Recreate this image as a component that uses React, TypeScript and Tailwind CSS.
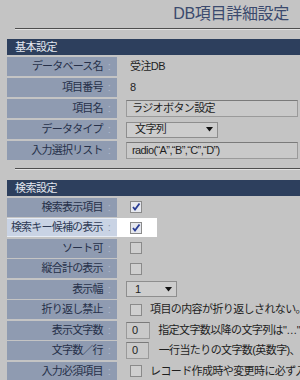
import React from "react";

const Check = ({ checked }: { checked?: boolean }) => (
  <div
    className={
      "w-[12px] h-[12px] border border-[#8a8a8a] flex items-center justify-center shrink-0 " +
      (checked ? "bg-[#e6e8ee]" : "bg-[#cfcfcf]")
    }
  >
    {checked && (
      <svg width="10" height="10" viewBox="0 0 10 10">
        <path d="M2 5 L4 7.5 L8.5 1.5" stroke="#2a3d94" strokeWidth="1.8" fill="none" />
      </svg>
    )}
  </div>
);

const Row = ({
  label,
  children,
}: {
  label: string;
  children?: React.ReactNode;
}) => (
  <div className="flex h-[19px]">
    <div className="w-[110px] shrink-0 flex items-center justify-end pr-[7px] text-[11px] tracking-[-0.8px] bg-[#8f9bb1] text-[#263049]">
      <span>{label}</span>
      <span className="ml-[5px] text-[#b3bccd]">:</span>
    </div>
    <div className="flex-1 flex items-center pl-[13px] text-[11px] text-[#1e1e1e] tracking-[-0.6px] whitespace-nowrap overflow-hidden">
      {children}
    </div>
  </div>
);

const Header = ({ title }: { title: string }) => (
  <div className="h-[16px] bg-[#2d3f5d] flex items-center pl-[8px] text-[11px] text-[#e4e8f0] tracking-[-0.5px]">
    {title}
  </div>
);

const Rule = () => (
  <div className="ml-[15px] border-t border-t-[#4e4e4e] border-b border-b-[#e2e2e2] h-[2px]" />
);

const Select = ({ value, w }: { value: string; w: string }) => (
  <div
    className={
      "h-[16px] -ml-[4px] border border-[#8e8e8e] bg-[#cdcdcd] flex items-center justify-between pl-[8px] pr-[4px] " +
      w
    }
  >
    <span className="text-[11px]">{value}</span>
    <svg width="7" height="5" viewBox="0 0 7 5">
      <path d="M0 0 H7 L3.5 4.5 Z" fill="#111" />
    </svg>
  </div>
);

const Input = ({ value, w }: { value: string; w: string }) => (
  <div
    className={
      "h-[17px] -ml-[4px] border border-[#9a9a9a] border-t-[#7a7a7a] bg-[#c9c9c9] flex items-center pl-[5px] text-[11px] " +
      w
    }
  >
    {value}
  </div>
);

export default function App() {
  return (
    <div className="w-[300px] h-[380px] bg-[#c4c4c4] overflow-hidden font-['Liberation_Sans','Noto_Sans_CJK_JP',sans-serif]">
      <div className="h-[28px] flex justify-end items-start pt-[2px] pr-[11px] text-[16px] text-[#3b4a6e] tracking-[-0.3px]">
        DB項目詳細設定
      </div>
      <Rule />
      <div className="pl-[7px] mt-[9px] flex flex-col gap-[2px]">
        <Header title="基本設定" />
        <Row label="データベース名">受注DB</Row>
        <Row label="項目番号">8</Row>
        <Row label="項目名">
          <Input value="ラジオボタン設定" w="w-[172px]" />
        </Row>
        <Row label="データタイプ">
          <Select value="文字列" w="w-[92px]" />
        </Row>
        <Row label="入力選択リスト">
          <Input value={'radio(\u201CA\u201D,\u201CB\u201D,\u201CC\u201D,\u201CD\u201D)'} w="w-[172px]" />
        </Row>
      </div>
      <div className="mt-[8px]">
        <Rule />
      </div>
      <div className="pl-[7px] mt-[10px] flex flex-col gap-[1.5px]">
        <Header title="検索設定" />
        <Row label="検索表示項目">
          <Check checked />
        </Row>
        <div className="flex h-[19px]">
          <div className="w-[110px] shrink-0 flex items-center justify-end pr-[7px] text-[11px] tracking-[-0.8px] bg-[#c9d3e4] text-[#2e3a55] border-y border-[#e6ecf5]">
            <span>検索キー候補の表示</span>
            <span className="ml-[5px] text-[#8f9ab0]">:</span>
          </div>
          <div className="w-[40px] bg-white flex items-center pl-[13px]">
            <Check checked />
          </div>
        </div>
        <Row label="ソート可">
          <Check />
        </Row>
        <Row label="縦合計の表示">
          <Check />
        </Row>
        <Row label="表示幅">
          <Select value="1" w="w-[51px]" />
        </Row>
        <Row label="折り返し禁止">
          <Check />
          <span className="ml-[8px]">項目の内容が折り返しされない。</span>
        </Row>
        <Row label="表示文字数">
          <Input value="0" w="w-[28px]" />
          <span className="ml-[8px]">指定文字数以降の文字列は"…"</span>
        </Row>
        <Row label="文字数／行">
          <Input value="0" w="w-[28px]" />
          <span className="ml-[10px]">一行当たりの文字数(英数字)、</span>
        </Row>
        <Row label="入力必須項目">
          <Check />
          <span className="ml-[8px]">レコード作成時や変更時に必ず入力</span>
        </Row>
      </div>
    </div>
  );
}
